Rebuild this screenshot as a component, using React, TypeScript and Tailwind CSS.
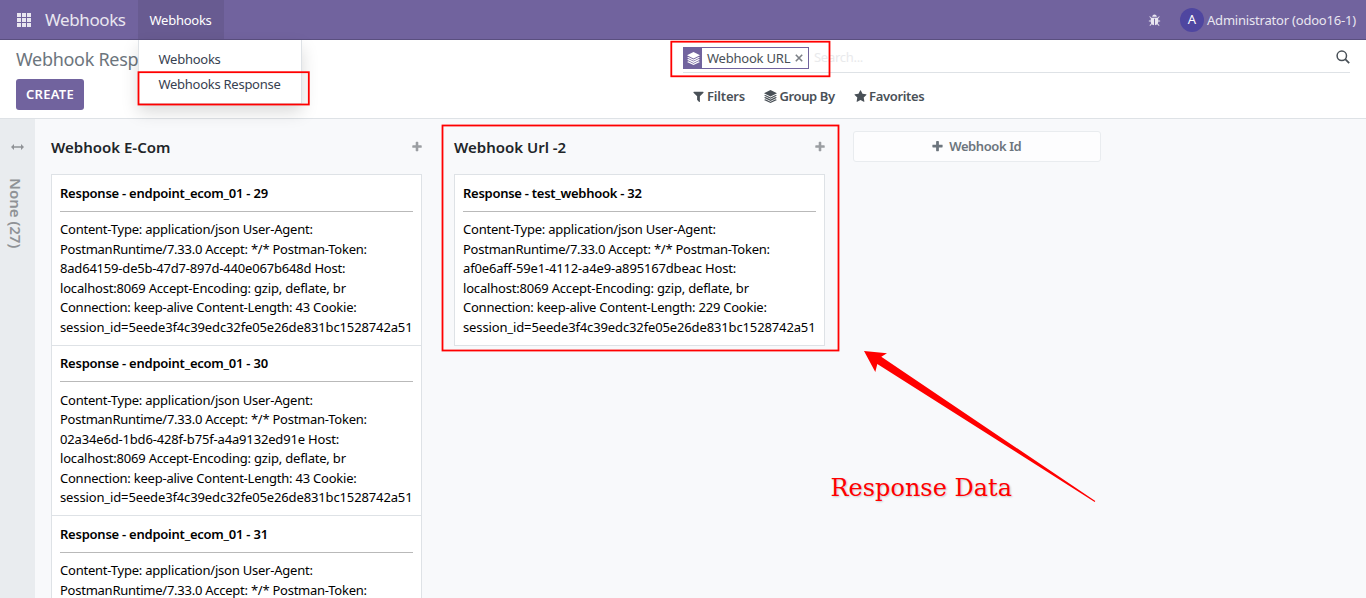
import type { ReactNode } from 'react';

function FaIcon({ d, className }: { d: string; className: string }) {
  return (
    <svg viewBox="0 0 1792 1792" fill="currentColor" className={`shrink-0 ${className}`}>
      <path d={d} />
    </svg>
  );
}

const BUG =
  'M1696 960q0 26-19 45t-45 19h-224q0 171-67 290l208 209q19 19 19 45t-19 45q-18 19-45 19t-45-19l-198-197q-5 5-15 13t-42 28.5-65 36.5-82 29-97 13v-896h-128v896q-51 0-101.5-13.5t-87-33-66-39-43.5-32.5l-15-14-183 207q-20 21-48 21-24 0-43-16-19-18-20.5-44.5t15.5-46.5l202-227q-58-114-58-274h-224q-26 0-45-19t-19-45 19-45 45-19h224v-294l-173-173q-19-19-19-45t19-45 45-19 45 19l173 173h844l173-173q19-19 45-19t45 19 19 45-19 45l-173 173v294h224q26 0 45 19t19 45zm-480-576h-640q0-133 93.5-226.5t226.5-93.5 226.5 93.5 93.5 226.5z';
const FILTER =
  'M1595 295q17 41-14 70l-493 493v742q0 42-39 59-13 5-25 5-27 0-45-19l-256-256q-19-19-19-45v-486l-493-493q-31-29-14-70 17-39 59-39h1280q42 0 59 39z';
const STAR =
  'M1728 647q0 22-26 48l-363 354 86 500q1 7 1 20 0 21-10.5 35.5t-30.5 14.5q-19 0-40-12l-449-236-449 236q-22 12-40 12-21 0-31.5-14.5t-10.5-35.5q0-6 2-20l86-500-364-354q-25-27-25-48 0-37 56-46l502-73 225-455q19-41 49-41t49 41l225 455 502 73q56 9 56 46z';
const PLUS =
  'M1600 736v192q0 40-28 68t-68 28h-416v416q0 40-28 68t-68 28h-192q-40 0-68-28t-28-68v-416h-416q-40 0-68-28t-28-68v-192q0-40 28-68t68-28h416v-416q0-40 28-68t68-28h192q40 0 68 28t28 68v416h416q40 0 68 28t28 68z';

function Layers({ className }: { className: string }) {
  return (
    <svg viewBox="0 0 13 13" fill="currentColor" className={`shrink-0 ${className}`}>
      <path d="M6.5 0 13 3.2 6.5 6.4 0 3.2Z" />
      <path d="M0 5.6 1.5 4.9 6.5 7.4 11.5 4.9 13 5.6 6.5 8.7Z" />
      <path d="M0 7.8 1.5 7.1 6.5 9.6 11.5 7.1 13 7.8 6.5 10.9Z" />
      <path d="M0 9.9 1.5 9.2 6.5 11.7 11.5 9.2 13 9.9 6.5 13Z" />
    </svg>
  );
}

interface Line {
  text: string;
  track: string;
}

interface CardData {
  title: Line;
  lines: Line[];
}

const CONTENT_TYPE: Line = { text: 'Content-Type: application/json User-Agent:', track: 'tracking-[-0.22px]' };
const RUNTIME: Line = { text: 'PostmanRuntime/7.33.0 Accept: */* Postman-Token:', track: 'tracking-[-0.25px]' };
const LOCALHOST: Line = { text: 'localhost:8069 Accept-Encoding: gzip, deflate, br', track: 'tracking-[-0.19px]' };
const CONNECTION: Line = { text: 'Connection: keep-alive Content-Length: 43 Cookie:', track: 'tracking-[-0.23px]' };
const SESSION: Line = { text: 'session_id=5eede3f4c39edc32fe05e26de831bc1528742a51', track: 'tracking-[-0.13px]' };

const ECOM: CardData[] = [
  {
    title: { text: 'Response - endpoint_ecom_01 - 29', track: 'tracking-[-0.24px]' },
    lines: [
      CONTENT_TYPE,
      RUNTIME,
      { text: '8ad64159-de5b-47d7-897d-440e067b648d Host:', track: 'tracking-[-0.195px]' },
      LOCALHOST,
      CONNECTION,
      SESSION,
    ],
  },
  {
    title: { text: 'Response - endpoint_ecom_01 - 30', track: 'tracking-[-0.24px]' },
    lines: [
      CONTENT_TYPE,
      RUNTIME,
      { text: '02a34e6d-1bd6-428f-b75f-a4a9132ed91e Host:', track: 'tracking-[-0.165px]' },
      LOCALHOST,
      CONNECTION,
      SESSION,
    ],
  },
  {
    title: { text: 'Response - endpoint_ecom_01 - 31', track: 'tracking-[-0.24px]' },
    lines: [CONTENT_TYPE, RUNTIME],
  },
];

const URL2: CardData[] = [
  {
    title: { text: 'Response - test_webhook - 32', track: 'tracking-[-0.27px]' },
    lines: [
      CONTENT_TYPE,
      RUNTIME,
      { text: 'af0e6aff-59e1-4112-a4e9-a895167dbeac Host:', track: 'tracking-[-0.16px]' },
      LOCALHOST,
      { text: 'Connection: keep-alive Content-Length: 229 Cookie:', track: 'tracking-[-0.23px]' },
      SESSION,
    ],
  },
];

function Card({ title, lines }: CardData) {
  return (
    <article className="-mb-px border border-[#dee2e6] bg-white px-2 pt-[8.3px] pb-[7.7px] leading-[19.5px] whitespace-nowrap text-black">
      <h3 className={`font-semibold ${title.track}`}>{title.text}</h3>
      <hr className="mt-[7.7px] mb-[8.3px] border-t border-[#b9b9b9]" />
      {lines.map((l) => (
        <p key={l.text} className={l.track}>
          {l.text}
        </p>
      ))}
    </article>
  );
}

function Column({ title, cards }: { title: string; cards: CardData[] }) {
  return (
    <section className="w-[403px] shrink-0 px-4">
      <header className="flex h-[55.4px] items-center justify-between">
        <h2 className="pt-0.5 text-[15px] font-semibold text-[#212529]">{title}</h2>
        <FaIcon d={PLUS} className="-mr-px h-[12px] w-[12px] text-[#9b9ea2]" />
      </header>
      {cards.map((c) => (
        <Card key={c.title.text} {...c} />
      ))}
    </section>
  );
}

function Tool({ icon, label, track }: { icon: ReactNode; label: string; track: string }) {
  return (
    <button className="flex items-center gap-[3px]">
      {icon}
      <span className={`font-semibold ${track}`}>{label}</span>
    </button>
  );
}

export default function App() {
  return (
    <div className="relative flex h-[598px] w-[1366px] flex-col overflow-hidden bg-[#f8f9fb] font-['Noto_Sans','Open_Sans',sans-serif] text-[13px] leading-[19.5px]">
      <nav className="flex h-10 shrink-0 items-center border-b border-[#5a4f7f] bg-[#71639e] text-[#e9e6f0]">
        <svg viewBox="0 0 14 14" fill="currentColor" className="ml-[17px] h-[14px] w-[14px]">
          {[0, 5, 10].map((y) => [0, 5, 10].map((x) => <rect key={`${x}-${y}`} x={x} y={y} width="4" height="4" />))}
        </svg>
        <span className="ml-[14px] w-[93px] text-[17px] tracking-[-0.4px]">Webhooks</span>
        <div className="flex h-full w-[86px] items-center bg-[#685b91] pt-[1.5px] pl-[11.5px] tracking-[-0.25px] text-white">
          Webhooks
        </div>
        <FaIcon d={BUG} className="mt-px ml-auto h-[13px] w-[13px]" />
        <span className="ml-[19px] flex h-6 w-6 items-center justify-center rounded-full bg-[#4f46a0] pt-px text-[13px] text-white">
          A
        </span>
        <span className="mr-[9px] ml-[3px] w-[150px] pt-[1.5px] tracking-[-0.2px] whitespace-nowrap">
          Administrator (odoo16-1)
        </span>
      </nav>

      <div className="flex h-[79px] shrink-0 border-b border-[#dee2e6] bg-white pr-4 pl-4">
        <div className="w-[667px] shrink-0">
          <h1 className="mt-[6px] h-[27px] text-[18px] leading-[27px] tracking-[-0.3px] whitespace-nowrap text-[#6c757d]">
            Webhook Resp
          </h1>
          <button className="mt-[6px] h-[31px] w-[68px] rounded-[3px] bg-[#71639e] font-semibold tracking-[0.3px] text-white">
            CREATE
          </button>
        </div>
        <div className="flex-1 text-[#495057]">
          <div className="flex h-[33px] items-center border-b border-[#dee2e6] pt-1">
            <div className="flex h-[22px] w-[126px] items-center border border-[#71639e]">
              <span className="flex h-full w-[18px] items-center justify-center bg-[#71639e] text-white">
                <Layers className="h-[13px] w-[13px]" />
              </span>
              <span className="ml-[5px] w-[86px] pt-[1.5px] tracking-[-0.22px]">Webhook URL</span>
              <svg viewBox="0 0 8 8" stroke="#7c8086" strokeWidth="1.6" className="ml-[2px] h-2 w-2 shrink-0">
                <path d="M.8.8 7.2 7.2M7.2.8.8 7.2" />
              </svg>
            </div>
            <span className="ml-[5px] tracking-[-0.28px] text-[#e9eaec]">Search...</span>
            <svg viewBox="0 0 14 14" fill="none" stroke="#495057" strokeWidth="1.5" className="ml-auto -mt-[3px] h-[14px] w-[14px]">
              <circle cx="5.8" cy="5.8" r="4.7" />
              <path d="m9.2 9.2 4 4" strokeWidth="1.8" />
            </svg>
          </div>
          <div className="flex pt-[14px] pl-[9px]">
            <div className="w-[71.5px]">
              <Tool icon={<FaIcon d={FILTER} className="-mr-px h-[13px] w-[13px]" />} label="Filters" track="tracking-[-0.18px]" />
            </div>
            <div className="w-[90.5px]">
              <Tool icon={<Layers className="h-[13px] w-[13px]" />} label="Group By" track="tracking-[-0.4px]" />
            </div>
            <Tool icon={<FaIcon d={STAR} className="-mr-px h-[13px] w-[13px]" />} label="Favorites" track="tracking-[-0.33px]" />
          </div>
        </div>
      </div>

      <main className="flex min-h-0 flex-1">
        <aside className="flex w-[35px] shrink-0 flex-col items-center bg-[#e9ecef] text-[#8f9296]">
          <svg viewBox="0 0 13 6" fill="currentColor" className="mt-[25px] h-[6px] w-[13px]">
            <path d="M0 3 3 0V2.2H10V0L13 3 10 6V3.8H3V6Z" />
          </svg>
          <span className="mt-[28px] mr-[3px] text-[15px] leading-[18px] font-semibold [writing-mode:vertical-rl]">None (27)</span>
        </aside>
        <Column title="Webhook E-Com" cards={ECOM} />
        <Column title="Webhook Url -2" cards={URL2} />
        <button className="mt-3 ml-3 flex h-[31px] w-[248px] items-center justify-center gap-[5px] rounded-[3px] border border-[#e9ecef] bg-[#fdfdfe] text-[#6c757d]">
          <FaIcon d={PLUS} className="h-[13px] w-[13px]" />
          <span className="mr-[1.5px] font-semibold tracking-[-0.4px]">Webhook Id</span>
        </button>
      </main>

      <div className="absolute top-10 left-[138px] h-[64px] w-[164px] border-x border-b border-[#dee2e6] bg-white pt-[10px] pl-[19.5px] text-[#374151] shadow-[0_8px_16px_rgba(0,0,0,0.15)]">
        <div className="h-[25px] tracking-[-0.25px]">Webhooks</div>
        <div className="tracking-[-0.27px]">Webhooks Response</div>
      </div>

      <svg viewBox="0 0 1366 598" className="pointer-events-none absolute top-0 left-0 h-[598px] w-[1366px]" fill="none">
        <g stroke="#ff0000" strokeWidth="1.8">
          <rect x="138.5" y="72.2" width="170.3" height="32.3" />
          <rect x="671.3" y="41.7" width="158.2" height="34.6" />
          <rect x="442.5" y="125.5" width="396" height="225" />
        </g>
        <path fill="#ff0000" d="M864 351 887 353.3 881.3 356.7 1095.3 501 1094.7 502 877.3 364 875.3 372Z" />
      </svg>
      <div className="absolute top-[473px] left-[830.5px] font-['DejaVu_Serif',serif] text-[24px] leading-[30px] whitespace-nowrap text-[#ff0000] [text-shadow:1px_1px_2px_rgba(0,0,0,0.2)]">
        Response Data
      </div>
    </div>
  );
}
